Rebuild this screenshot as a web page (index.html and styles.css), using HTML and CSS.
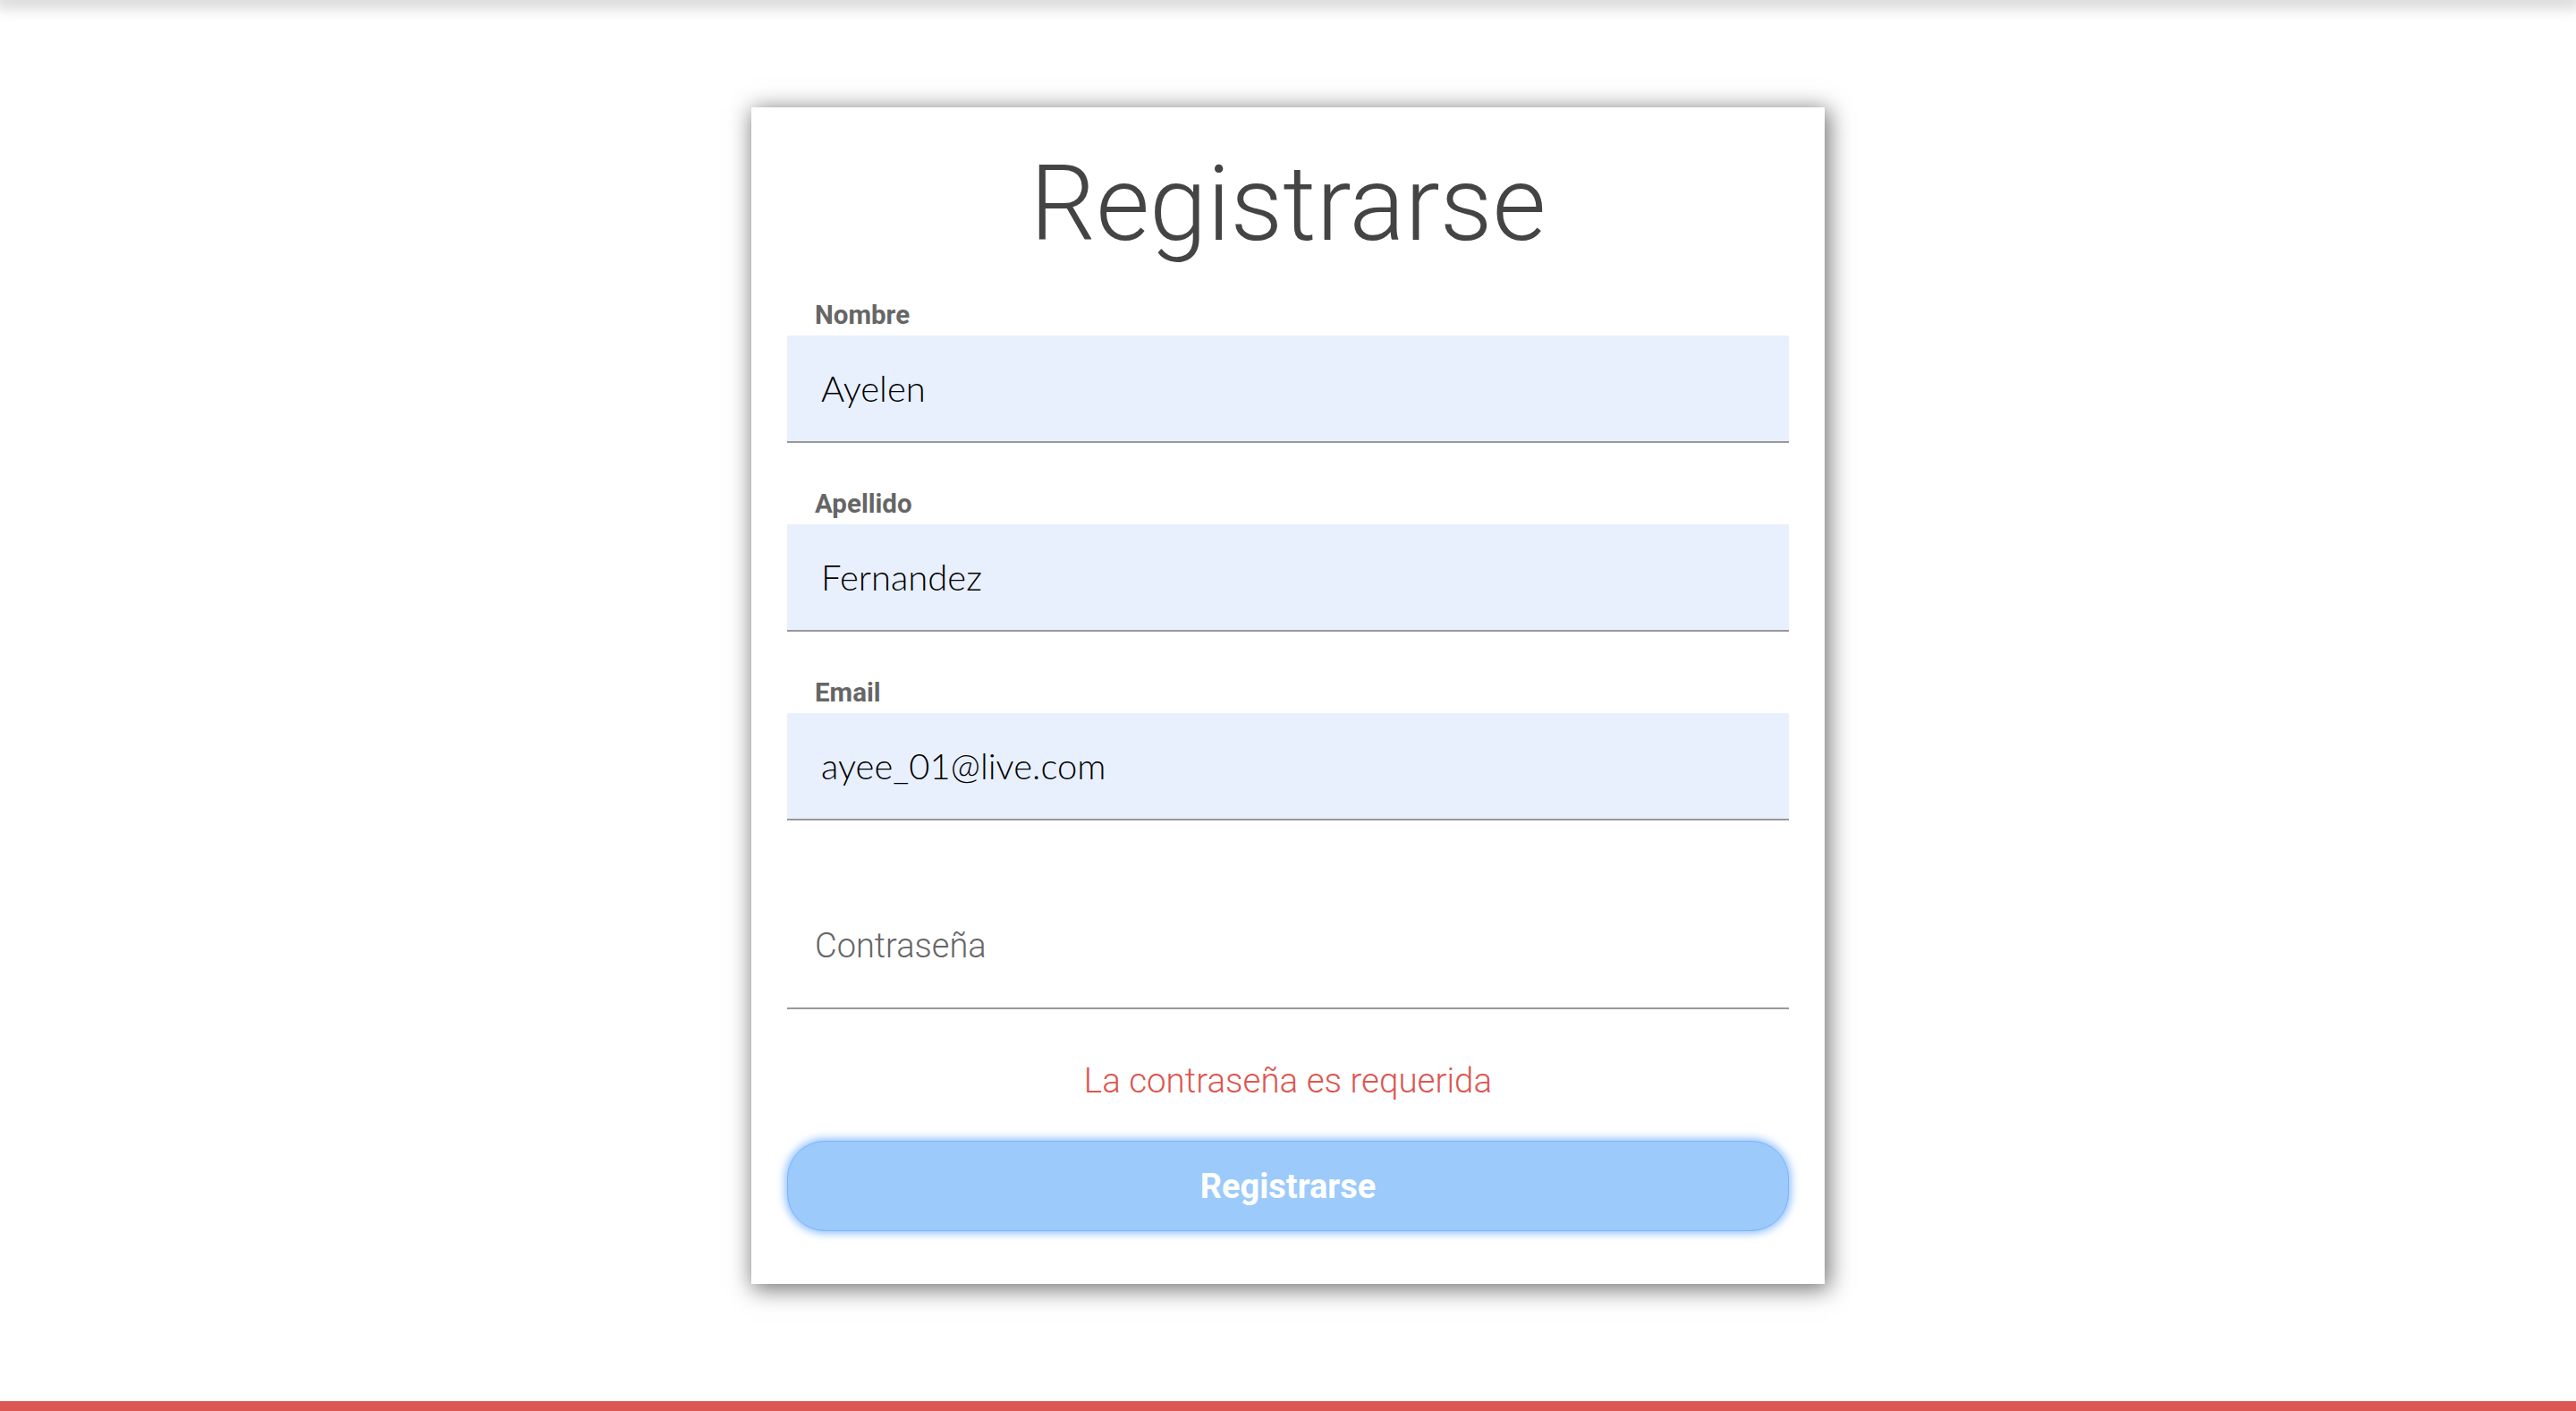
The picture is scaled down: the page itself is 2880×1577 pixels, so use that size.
FILE: index.html
```html
<!DOCTYPE html>
<html lang="es">
<head>
<meta charset="utf-8">
<title>Registrarse</title>
<link rel="stylesheet" href="styles.css">
</head>
<body>
<div class="page">
  <div class="topbar"></div>
  <main class="main">
    <form class="card">
      <h1 class="title">Registrarse</h1>
      <div class="group">
        <label class="label" for="nombre">Nombre</label>
        <input class="field filled" id="nombre" type="text" value="Ayelen">
      </div>
      <div class="group">
        <label class="label" for="apellido">Apellido</label>
        <input class="field filled" id="apellido" type="text" value="Fernandez">
      </div>
      <div class="group">
        <label class="label" for="email">Email</label>
        <input class="field filled" id="email" type="email" value="ayee_01@live.com">
      </div>
      <div class="group">
        <label class="label" for="pass"></label>
        <input class="field empty" id="pass" type="password" placeholder="Contraseña">
      </div>
      <p class="error">La contraseña es requerida</p>
      <button class="submit" type="button">Registrarse</button>
    </form>
  </main>
  <footer class="footer"></footer>
</div>
</body>
</html>
```
FILE: styles.css
```css
html, body {
  margin: 0;
  padding: 0;
  background: #ffffff;
}

.page {
  min-height: 100vh;
  display: flex;
  flex-direction: column;
  font-family: "Roboto", "Liberation Sans", sans-serif;
  overflow: hidden;
}

.topbar {
  height: 0;
  box-shadow: 0 0 18px 6px rgba(0, 0, 0, 0.25);
}

.main {
  flex: 1;
  display: flex;
  justify-content: center;
  align-items: flex-start;
  padding-top: 120px;
}

.card {
  width: 1200px;
  box-sizing: border-box;
  background: #ffffff;
  padding: 39px 40px 59px 40px;
  box-shadow: 3px 4px 24px 2px rgba(0, 0, 0, 0.55);
  display: flex;
  flex-direction: column;
}

.title {
  margin: 0 0 37px 0;
  font-family: "Roboto", sans-serif;
  font-weight: 300;
  font-size: 116px;
  line-height: 139px;
  color: #444444;
  text-align: center;
}

.group {
  display: flex;
  flex-direction: column;
  margin-bottom: 51px;
}

.group:last-of-type {
  margin-bottom: 0;
}

.label {
  display: block;
  height: 34px;
  margin: 0 0 6px 31px;
  font-family: "Roboto", sans-serif;
  font-weight: 700;
  font-size: 29.5px;
  line-height: 34px;
  color: #666666;
}

.field {
  display: block;
  width: 100%;
  height: 120px;
  box-sizing: border-box;
  margin: 0;
  border: 0;
  border-bottom: 2px solid #999999;
  outline: none;
  border-radius: 0;
}

.filled {
  background: #e8f0fe;
  padding: 0 0 0 38px;
  font-family: "Lato", "Open Sans", sans-serif;
  font-weight: 300;
  font-size: 40px;
  color: #000000;
}

.empty {
  background: #ffffff;
  padding: 0 0 20px 31px;
  font-family: "Roboto", sans-serif;
  font-weight: 300;
  font-size: 38px;
  color: #333333;
}

.empty::placeholder {
  color: #666666;
  opacity: 1;
}

.error {
  margin: 58px 0 0 0;
  font-family: "Roboto", sans-serif;
  font-weight: 300;
  font-size: 38.5px;
  line-height: 43px;
  color: #dc5650;
  text-align: center;
}

.submit {
  margin-top: 46px;
  height: 101px;
  width: 100%;
  box-sizing: border-box;
  border: 1px solid #7db3fa;
  border-radius: 42px;
  background: #9bcafb;
  color: #ffffff;
  font-family: "Roboto", sans-serif;
  font-weight: 700;
  font-size: 38px;
  box-shadow: 0 0 9px 3px rgba(70, 150, 255, 0.55);
  cursor: default;
}

.footer {
  height: 11px;
  background: #da5752;
}
```
